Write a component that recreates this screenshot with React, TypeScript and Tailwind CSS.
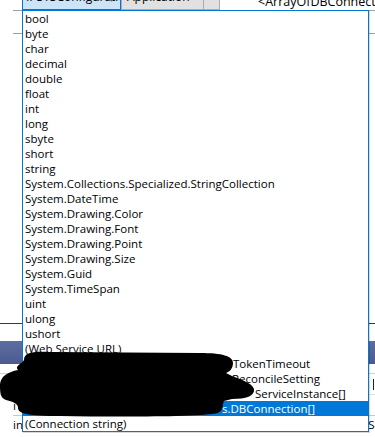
import React from "react";

const plain = [
  "bool",
  "byte",
  "char",
  "decimal",
  "double",
  "float",
  "int",
  "long",
  "sbyte",
  "short",
  "string",
  "System.Collections.Specialized.StringCollection",
  "System.DateTime",
  "System.Drawing.Color",
  "System.Drawing.Font",
  "System.Drawing.Point",
  "System.Drawing.Size",
  "System.Guid",
  "System.TimeSpan",
  "uint",
  "ulong",
  "ushort",
  "(Web Service URL)",
];

const font = { fontFamily: '"Open Sans", "Noto Sans", sans-serif' };

export default function App() {
  return (
    <div
      className="relative w-[375px] h-[437px] overflow-hidden bg-white text-black text-[11.5px] leading-[15px]"
      style={font}
    >
      {/* background content */}
      <div className="flex flex-col w-full">
        <div className="flex h-[10px] items-end overflow-hidden">
          <div className="w-[22px] shrink-0" />
          <div className="relative flex h-[22px] w-[99px] shrink-0 items-end overflow-hidden border border-[#0078d7] bg-[#cce4f7] pl-[3px] pb-[6px] text-[12px] leading-none">
            <span className="whitespace-nowrap">IPSYSConfiguration</span>
            <span className="absolute right-[5px] bottom-[6px] text-[7px] text-[#606060]">▼</span>
          </div>
          <div className="flex h-[22px] w-[83px] shrink-0 items-end border border-[#adadad] bg-[#e1e1e1] pl-[5px] pb-[6px] text-[12px] leading-none">
            Application
          </div>
          <div className="h-[22px] w-[16px] shrink-0 border border-l-0 border-[#adadad] bg-[#e1e1e1]" />
          <div className="w-[38px] shrink-0" />
          <div className="flex h-[22px] shrink-0 items-end pb-[2px] text-[12.5px] leading-none whitespace-nowrap">
            &lt;ArrayOfDBConnection
          </div>
        </div>
        <div className="ml-[13px] h-px bg-[#a0a0a0]" />
        <div className="h-[22px]" />
        <div className="ml-[13px] h-px bg-[#a0a0a0]" />
        <div className="h-[289px]" />
        <div className="h-px bg-[#3a3a3a]" />
        <div className="h-[17px]" />
        <div className="h-[23px] bg-gradient-to-b from-[#5d6ca2] to-[#4c5b8f]" />
        <div className="h-[9px]" />
        <div className="h-px bg-[#d0d0d0]" />
        <div className="flex h-[20px] items-center justify-end pr-[1px]">
          <div className="h-[11px] w-px bg-[#202020]" />
        </div>
        <div className="h-px bg-[#e0e0e0]" />
        <div className="flex h-[20px] items-center pl-[13px]">i</div>
        <div className="ml-[13px] h-px bg-[#c8c8c8]" />
        <div className="flex h-[16px] items-center justify-between pl-[13px]">
          <span>in</span>
          <span className="-mr-[6px]">Se</span>
        </div>
      </div>

      {/* dropdown list popup */}
      <div className="absolute left-[22px] top-[10px] w-[347px] border border-[#0078d7] bg-white shadow-[1px_1px_0_rgba(0,0,0,0.15)]">
        {plain.map((t) => (
          <div key={t} className="h-[15px] pl-[2px] whitespace-nowrap">
            {t}
          </div>
        ))}
        <div className="flex h-[15px] pl-[2px] whitespace-nowrap">
          <span className="inline-block w-[208px]" />
          <span>TokenTimeout</span>
        </div>
        <div className="flex h-[15px] pl-[2px] whitespace-nowrap">
          <span className="inline-block w-[207px]" />
          <span>ReconcileSetting</span>
        </div>
        <div className="flex h-[15px] pl-[2px] whitespace-nowrap">
          <span className="inline-block w-[230px]" />
          <span>ServiceInstance[]</span>
        </div>
        <div className="flex h-[15px] pl-[2px] whitespace-nowrap bg-[#0078d7] text-white">
          <span className="inline-block w-[197px]" />
          <span>s.DBConnection[]</span>
        </div>
        <div className="h-[15px] pl-[2px] whitespace-nowrap">(Connection string)</div>
      </div>

      {/* redaction scribble */}
      <svg
        className="absolute left-0 top-0 pointer-events-none"
        width="375"
        height="437"
        viewBox="0 0 375 437"
      >
        <path
          d="M24 360 C24 352 34 351 50 352 L200 353 C222 353 233 356 233 363 C233 369 229 372 226 373 L232 376 C240 379 252 383 254 389 C255 396 246 399 232 399 L224 401 C222 405 224 410 218 413 C200 417 120 417 60 416 C30 416 18 414 18 408 C18 404 14 402 6 400 C0 398 0 392 0 384 C1 376 8 372 18 370 C14 366 22 364 24 360 Z"
          fill="#000"
        />
      </svg>
    </div>
  );
}
